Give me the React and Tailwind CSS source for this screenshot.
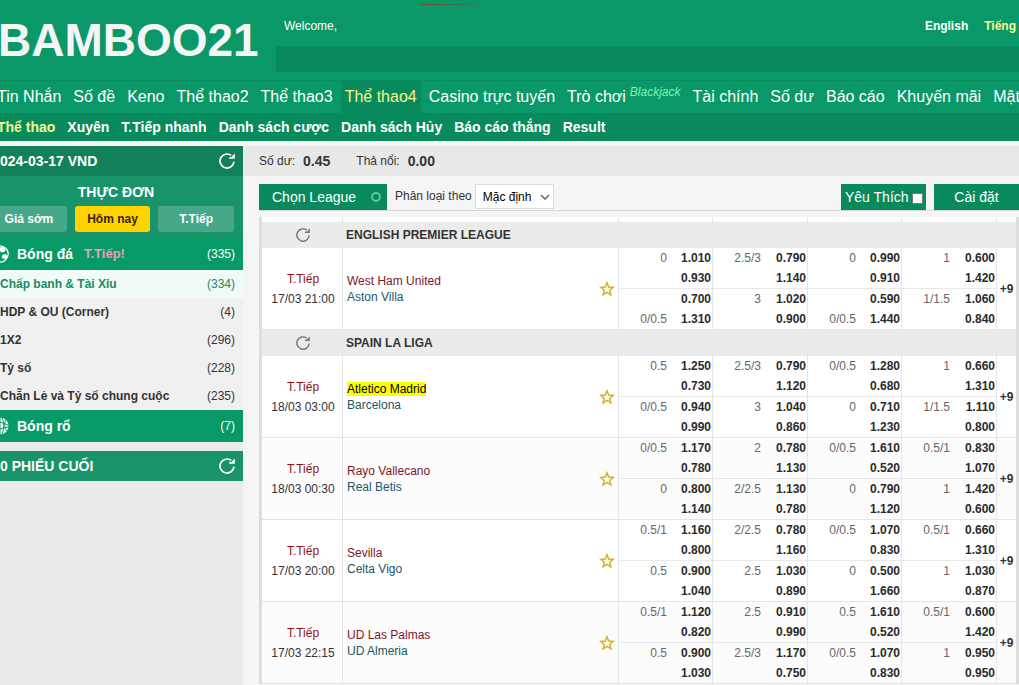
import React, { useState } from 'react';

const MAIN_NAV = ['Tin Nhắn', 'Số đề', 'Keno', 'Thể thao2', 'Thể thao3', 'Thể thao4', 'Casino trực tuyến', 'Trò chơi', 'Tài chính', 'Số dư', 'Báo cáo', 'Khuyến mãi', 'Mật'];

const SUB_NAV = ['Thể thao', 'Xuyên', 'T.Tiếp nhanh', 'Danh sách cược', 'Danh sách Hủy', 'Báo cáo thắng', 'Result'];

const PERIODS = ['Giá sớm', 'Hôm nay', 'T.Tiếp'];

const MARKETS = [
    { label: 'Chấp banh & Tài Xỉu', count: 334 },
    { label: 'HDP & OU (Corner)', count: 4 },
    { label: '1X2', count: 296 },
    { label: 'Tỷ số', count: 228 },
    { label: 'Chẵn Lẻ và Tỷ số chung cuộc', count: 235 },
];

// odds: 4 columns x 4 lines, each line is [handicap, price]
const LEAGUES = [
    {
        name: 'ENGLISH PREMIER LEAGUE',
        matches: [
            {
                time: '17/03 21:00', home: 'West Ham United', away: 'Aston Villa',
                odds: [
                    [['0', '1.010'], ['', '0.930'], ['', '0.700'], ['0/0.5', '1.310']],
                    [['2.5/3', '0.790'], ['', '1.140'], ['3', '1.020'], ['', '0.900']],
                    [['0', '0.990'], ['', '0.910'], ['', '0.590'], ['0/0.5', '1.440']],
                    [['1', '0.600'], ['', '1.420'], ['1/1.5', '1.060'], ['', '0.840']],
                ],
            },
        ],
    },
    {
        name: 'SPAIN LA LIGA',
        matches: [
            {
                time: '18/03 03:00', home: 'Atletico Madrid', away: 'Barcelona', marked: true,
                odds: [
                    [['0.5', '1.250'], ['', '0.730'], ['0/0.5', '0.940'], ['', '0.990']],
                    [['2.5/3', '0.790'], ['', '1.120'], ['3', '1.040'], ['', '0.860']],
                    [['0/0.5', '1.280'], ['', '0.680'], ['0', '0.710'], ['', '1.230']],
                    [['1', '0.660'], ['', '1.310'], ['1/1.5', '1.110'], ['', '0.800']],
                ],
            },
            {
                time: '18/03 00:30', home: 'Rayo Vallecano', away: 'Real Betis',
                odds: [
                    [['0/0.5', '1.170'], ['', '0.780'], ['0', '0.800'], ['', '1.140']],
                    [['2', '0.780'], ['', '1.130'], ['2/2.5', '1.130'], ['', '0.780']],
                    [['0/0.5', '1.610'], ['', '0.520'], ['0', '0.790'], ['', '1.120']],
                    [['0.5/1', '0.830'], ['', '1.070'], ['1', '1.420'], ['', '0.600']],
                ],
            },
            {
                time: '17/03 20:00', home: 'Sevilla', away: 'Celta Vigo',
                odds: [
                    [['0.5/1', '1.160'], ['', '0.800'], ['0.5', '0.900'], ['', '1.040']],
                    [['2/2.5', '0.780'], ['', '1.160'], ['2.5', '1.030'], ['', '0.890']],
                    [['0/0.5', '1.070'], ['', '0.830'], ['0', '0.500'], ['', '1.660']],
                    [['0.5/1', '0.660'], ['', '1.310'], ['1', '1.030'], ['', '0.870']],
                ],
            },
            {
                time: '17/03 22:15', home: 'UD Las Palmas', away: 'UD Almeria',
                odds: [
                    [['0.5/1', '1.120'], ['', '0.820'], ['0.5', '0.900'], ['', '1.030']],
                    [['2.5', '0.910'], ['', '0.990'], ['2.5/3', '1.170'], ['', '0.750']],
                    [['0.5', '1.610'], ['', '0.520'], ['0/0.5', '1.070'], ['', '0.830']],
                    [['0.5/1', '0.600'], ['', '1.420'], ['1', '0.950'], ['', '0.950']],
                ],
            },
        ],
    },
];

const RefreshIcon = ({ className }) => (
    <svg viewBox="0 0 16 16" className={className} fill="none" aria-hidden="true">
        <path d="M15 8.6A7 7 0 1 1 12.2 2.4" stroke="currentColor" strokeWidth="1.7" />
        <path d="M15.8 0.4V5.8H10.2V4.3L12.6 4L14.2 2Z" fill="currentColor" />
    </svg>
);

const StarIcon = () => (
    <svg viewBox="0 0 16 16" className="w-4 h-4" aria-hidden="true">
        <path d="M8 1.8L9.7 6L14.2 6.4L10.8 9.4L11.9 13.8L8 11.4L4.1 13.8L5.2 9.4L1.8 6.4L6.3 6Z" fill="#fffaf0" stroke="#d9b01e" strokeWidth="1.5" />
    </svg>
);

const SoccerIcon = () => (
    <svg viewBox="0 0 18 18" className="w-[18px] h-[18px]" aria-hidden="true">
        <circle cx="9" cy="9" r="8.2" fill="#079966" stroke="#fff" strokeWidth="1.2" />
        <path d="M9 2.6L12 1.6L14.6 3.6L14 6.6L11 7.6L9 6.2L7 7.6L4 6.6L3.4 3.6L6 1.6Z" fill="#fff" />
        <path d="M11.4 10L14 9L16.4 10.4L15.4 13.6L12.6 14L10.6 12.4ZM6.6 10L4 9L1.6 10.4L2.6 13.6L5.4 14L7.4 12.4Z" fill="#fff" />
    </svg>
);

const BasketballIcon = () => (
    <svg viewBox="0 0 18 18" className="w-[18px] h-[18px]" aria-hidden="true">
        <circle cx="9" cy="9" r="8.6" fill="#fff" />
        <path d="M10.5 0C13.4 4 13.6 13 10.5 18M15 2.6C13 6 13 11 16 14M9 5L18 8.4M9 12L17.6 9.6M3 2C5.4 6 5.4 12 3 16M9 0V18" fill="none" stroke="#079966" strokeWidth="1" />
    </svg>
);

const OddsLine = ({ line }) => (
    <div className="flex h-5 leading-5 pr-px">
        <span className="w-12 text-right text-[#666]">{line[0]}</span>
        <span className="flex-1 text-right font-bold text-[#2b2b2b]">{line[1]}</span>
    </div>
);

const MatchRow = ({ match, shaded }) => (
    <tr className={shaded ? 'bg-[#fcfcfc]' : 'bg-white'}>
        <td className="h-[82px] pl-0.5 text-center leading-5 border-b border-[#e4e4e4]">
            <div className="text-[#8f1414]">T.Tiếp</div>
            <div className="text-[#333]">{match.time}</div>
        </td>
        <td className="border-l border-b border-[#e4e4e4]">
            <div className="flex items-center justify-between pl-1 pr-[3px]">
                <div className="leading-4">
                    <div className="text-[#7d1727]">
                        {match.marked ? <mark className="bg-[#ffff00] text-black">{match.home}</mark> : match.home}
                    </div>
                    <div className="text-[#225763]">{match.away}</div>
                </div>
                <button type="button" aria-label="Yêu thích"><StarIcon /></button>
            </div>
        </td>
        {match.odds.map((column, i) => (
            <td key={i} className="border-l border-b border-[#e2e6e8]">
                <div className="border-b border-[#e8e8e8]">
                    <OddsLine line={column[0]} />
                    <OddsLine line={column[1]} />
                </div>
                <OddsLine line={column[2]} />
                <OddsLine line={column[3]} />
            </td>
        ))}
        <td className="border-l border-b border-[#e2e6e8] text-center text-[#333] font-bold">+9</td>
    </tr>
);

const Header = () => {
    const [active, setActive] = useState('Thể thao4');
    return (
        <header className="bg-[#0b9868] text-white overflow-hidden">
            <div className="relative flex h-20">
                <div className="absolute left-[421px] top-1 w-[70px] h-px bg-linear-to-r from-[#7d4428] to-transparent" />
                <div className="w-[276px] shrink-0 flex items-center">
                    <h1 className="-ml-[2px] text-[46px] leading-[80px] font-bold text-[#f5f5f5]">BAMBOO21</h1>
                </div>
                <div className="flex-1">
                    <div className="flex items-center justify-between h-[46px] pl-2 pr-[3px] pt-1.5 text-xs">
                        <span>Welcome,</span>
                        <div className="flex gap-4 font-bold">
                            <a href="#en">English</a>
                            <a href="#vi" className="text-[#f8f58c]">Tiếng</a>
                        </div>
                    </div>
                    <div className="h-[26px] bg-[#088a5d]" />
                </div>
            </div>
            <nav className="flex gap-1 h-[33px] -ml-[7px] border-t border-[#078c5e] text-base leading-8 whitespace-nowrap">
                {MAIN_NAV.map(item => (
                    <a key={item} href="#nav" onClick={() => setActive(item)}
                        className={item === active ? 'px-1 bg-[#088a5d] text-[#f8f58c]' : 'px-1'}>
                        {item}
                        {item === 'Trò chơi' && <i className="relative -top-1.5 ml-1 text-xs leading-none text-[#7df5b8]">Blackjack</i>}
                    </a>
                ))}
            </nav>
            <nav className="flex gap-3 h-7 bg-[#088a5d] text-sm leading-7 font-bold whitespace-nowrap">
                {SUB_NAV.map((item, i) => (
                    <a key={item} href="#sub" className={i === 0 ? '-ml-[3px] text-[#f8f58c]' : ''}>{item}</a>
                ))}
            </nav>
        </header>
    );
};

const Sidebar = () => {
    const [period, setPeriod] = useState('Hôm nay');
    return (
        <aside className="w-[243px] shrink-0 bg-[#ebebeb] overflow-hidden">
            <div className="flex items-center justify-between h-[30px] pr-2 bg-[#12815a] text-white text-sm font-bold">
                <span>024-03-17 VND</span>
                <button type="button" aria-label="Refresh"><RefreshIcon className="w-4 h-4" /></button>
            </div>
            <div className="h-[62px] bg-[#18936a] text-white">
                <h2 className="-ml-[11px] h-[30px] leading-8 text-sm font-bold text-center">THỰC ĐƠN</h2>
                <div className="flex gap-2 -ml-[9px] mr-[9px]">
                    {PERIODS.map(p => (
                        <button key={p} type="button" onClick={() => setPeriod(p)}
                            className={p === period
                                ? 'flex-1 h-[26px] rounded-[3px] text-xs font-bold bg-[#ffd200] text-[#33270a]'
                                : 'flex-1 h-[26px] rounded-[3px] text-xs font-bold bg-[#46a888] text-white'}>
                            {p}
                        </button>
                    ))}
                </div>
            </div>
            <div className="flex items-center h-8 pr-2 bg-[#079966] text-white">
                <span className="-ml-[9px] mr-2"><SoccerIcon /></span>
                <span className="text-sm font-bold">Bóng đá</span>
                <span className="ml-[11px] text-[13px] font-bold text-[#e5a3b4]">T.Tiếp!</span>
                <span className="ml-auto text-xs">(335)</span>
            </div>
            <ul>
                {MARKETS.map((m, i) => (
                    <li key={m.label}>
                        <a href="#market" className={i === 0
                            ? 'flex justify-between h-7 leading-7 pr-2 text-xs bg-[#f0fbf8] text-[#1b8a60]'
                            : 'flex justify-between h-7 leading-7 pr-2 text-xs bg-[#f0f0f0] text-[#333]'}>
                            <span className="font-bold">{m.label}</span>
                            <span>({m.count})</span>
                        </a>
                    </li>
                ))}
            </ul>
            <div className="flex items-center h-8 pr-2 bg-[#079966] text-white">
                <span className="-ml-[9px] mr-2"><BasketballIcon /></span>
                <span className="text-sm font-bold">Bóng rổ</span>
                <span className="ml-auto text-xs">(7)</span>
            </div>
            <div className="flex items-center justify-between mt-[9px] h-[30px] pr-2 bg-[#18936a] text-white text-sm font-bold">
                <span>0 PHIẾU CUỐI</span>
                <button type="button" aria-label="Refresh"><RefreshIcon className="w-4 h-4" /></button>
            </div>
        </aside>
    );
};

const Toolbar = () => (
    <div className="flex h-[27px] mt-2 ml-4 border-b border-[#d8d8d8]">
        <button type="button" className="flex items-center justify-between w-32 h-[26px] pl-[13px] pr-1.5 bg-[#088a5d] text-white text-sm">
            Chọn League
            <span className="w-2.5 h-2.5 rounded-full border-2 border-[#5cc79f]" />
        </button>
        <label htmlFor="sort" className="ml-2 text-xs leading-6 text-[#333]">Phân loại theo</label>
        <div className="relative ml-[3px]">
            <select id="sort" className="appearance-none w-[79px] h-[25px] pl-[7px] border border-[#ddd] bg-white text-xs text-black">
                <option>Mặc định</option>
            </select>
            <svg viewBox="0 0 10 6" className="absolute right-1 top-[10px] w-[10px] h-[6px] pointer-events-none" aria-hidden="true">
                <path d="M1 1L5 5L9 1" fill="none" stroke="#666" strokeWidth="1.5" />
            </svg>
        </div>
        <div className="flex gap-2 ml-auto">
            <label className="flex items-center w-[85px] h-[26px] pl-1 bg-[#088a5d] text-white text-sm">
                Yêu Thích
                <input type="checkbox" className="appearance-none ml-[3px] mt-0.5 w-[11px] h-[11px] border border-[#777] bg-white" />
            </label>
            <button type="button" className="w-[85px] h-[26px] bg-[#088a5d] text-white text-sm">Cài đặt</button>
        </div>
    </div>
);

const App = () => (
    <div className="flex flex-col h-screen overflow-hidden bg-[#f5f5f5] text-xs" style={{ fontFamily: '"Liberation Sans", Arial, sans-serif' }}>
        <Header />
        <div className="flex flex-1 min-h-0 pt-[5px]">
            <Sidebar />
            <main className="flex-1 min-w-0">
                <div className="flex items-center h-[30px] pl-4 bg-[#e8e8e8] text-[#333]">
                    <span>Số dư:</span>
                    <b className="ml-2 text-sm">0.45</b>
                    <span className="ml-[26px]">Thả nổi:</span>
                    <b className="ml-2 text-sm">0.00</b>
                </div>
                <Toolbar />
                <div className="mt-1.5 ml-4 border-x-[3px] border-[#ddd]">
                    <table className="w-full table-fixed border-separate border-spacing-0 text-xs">
                        <colgroup>
                            <col className="w-20" />
                            <col />
                            <col className="w-[94px]" />
                            <col className="w-[95px]" />
                            <col className="w-[94px]" />
                            <col className="w-[95px]" />
                            <col className="w-5" />
                        </colgroup>
                        <thead>
                            <tr className="bg-white">
                                {[0, 1, 2, 3, 4, 5, 6].map(i => (
                                    <td key={i} className={i === 0 ? 'h-[5px]' : 'h-[5px] border-l border-[#e2e6e8]'} />
                                ))}
                            </tr>
                        </thead>
                        {LEAGUES.map(league => (
                            <tbody key={league.name}>
                                <tr className="bg-[#ebebeb]">
                                    <td className="h-[26px] pl-0.5">
                                        <button type="button" aria-label="Refresh" className="block mx-auto text-[#777]"><RefreshIcon className="w-[14px] h-[14px]" /></button>
                                    </td>
                                    <th colSpan={6} className="pl-1 text-left font-bold text-[#333]">{league.name}</th>
                                </tr>
                                {league.matches.map((m, i) => <MatchRow key={m.home} match={m} shaded={i % 2 === 1} />)}
                            </tbody>
                        ))}
                    </table>
                </div>
            </main>
        </div>
    </div>
);

export default App;
